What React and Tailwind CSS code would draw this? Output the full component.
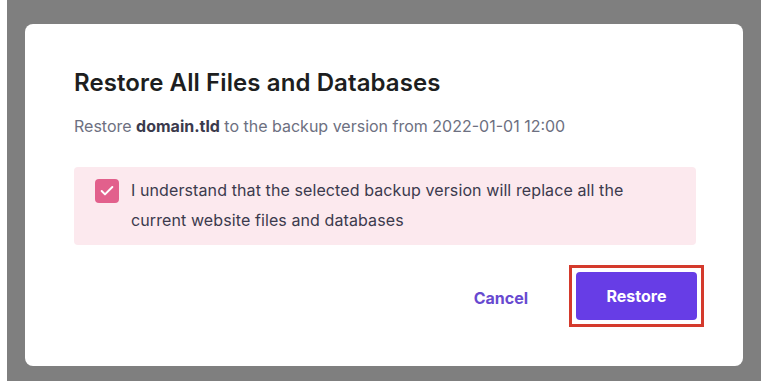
import { Check } from 'lucide-react';

export default function App() {
  return (
    <div className="w-[772px] h-[387px] bg-white" style={{ fontFamily: 'Inter, "Noto Sans", sans-serif' }}>
      <div className="ml-[7px] w-[754px] h-[381px] bg-[#7f7f7f] pl-[18px] pr-[18px] pt-[24px] pb-[15px]">
        <div className="h-full bg-white rounded-[8px] pl-[49px] pr-[47px] pt-[43px]">
          <h2 className="text-[24px] leading-[32px] font-semibold text-[#1d1e20] tracking-[0.1px]">
            Restore All Files and Databases
          </h2>
          <p className="mt-[15px] text-[16px] leading-[24px] text-[#6d7081]">
            Restore <span className="font-bold text-[#3b3a4d]">domain.tld</span> to the backup version from 2022-01-01 12:00
          </p>
          <div className="mt-[29px] bg-[#fce9ee] rounded-[4px] pl-[21px] pr-[20px] pt-[8px] pb-[10px] flex items-start gap-[12px]">
            <div className="mt-[4px] w-[24px] h-[24px] shrink-0 rounded-[4px] bg-[#e2608c] flex items-center justify-center">
              <Check size={16} strokeWidth={3} className="text-white" />
            </div>
            <p className="max-w-[520px] text-[16px] leading-[30px] text-[#3b3a4d] tracking-[0.1px]">
              I understand that the selected backup version will replace all the current website files and databases
            </p>
          </div>
          <div className="mt-[20px] flex items-center justify-end gap-[41px] -mr-[8px]">
            <button className="mt-[3px] text-[16px] font-bold text-[#6749d0]">Cancel</button>
            <div className="border-[3px] border-[#d43a2c] p-[4px]">
              <button className="w-[121px] h-[48px] rounded-[4px] bg-[#673de6] text-white text-[16px] font-bold">
                Restore
              </button>
            </div>
          </div>
        </div>
      </div>
    </div>
  );
}
